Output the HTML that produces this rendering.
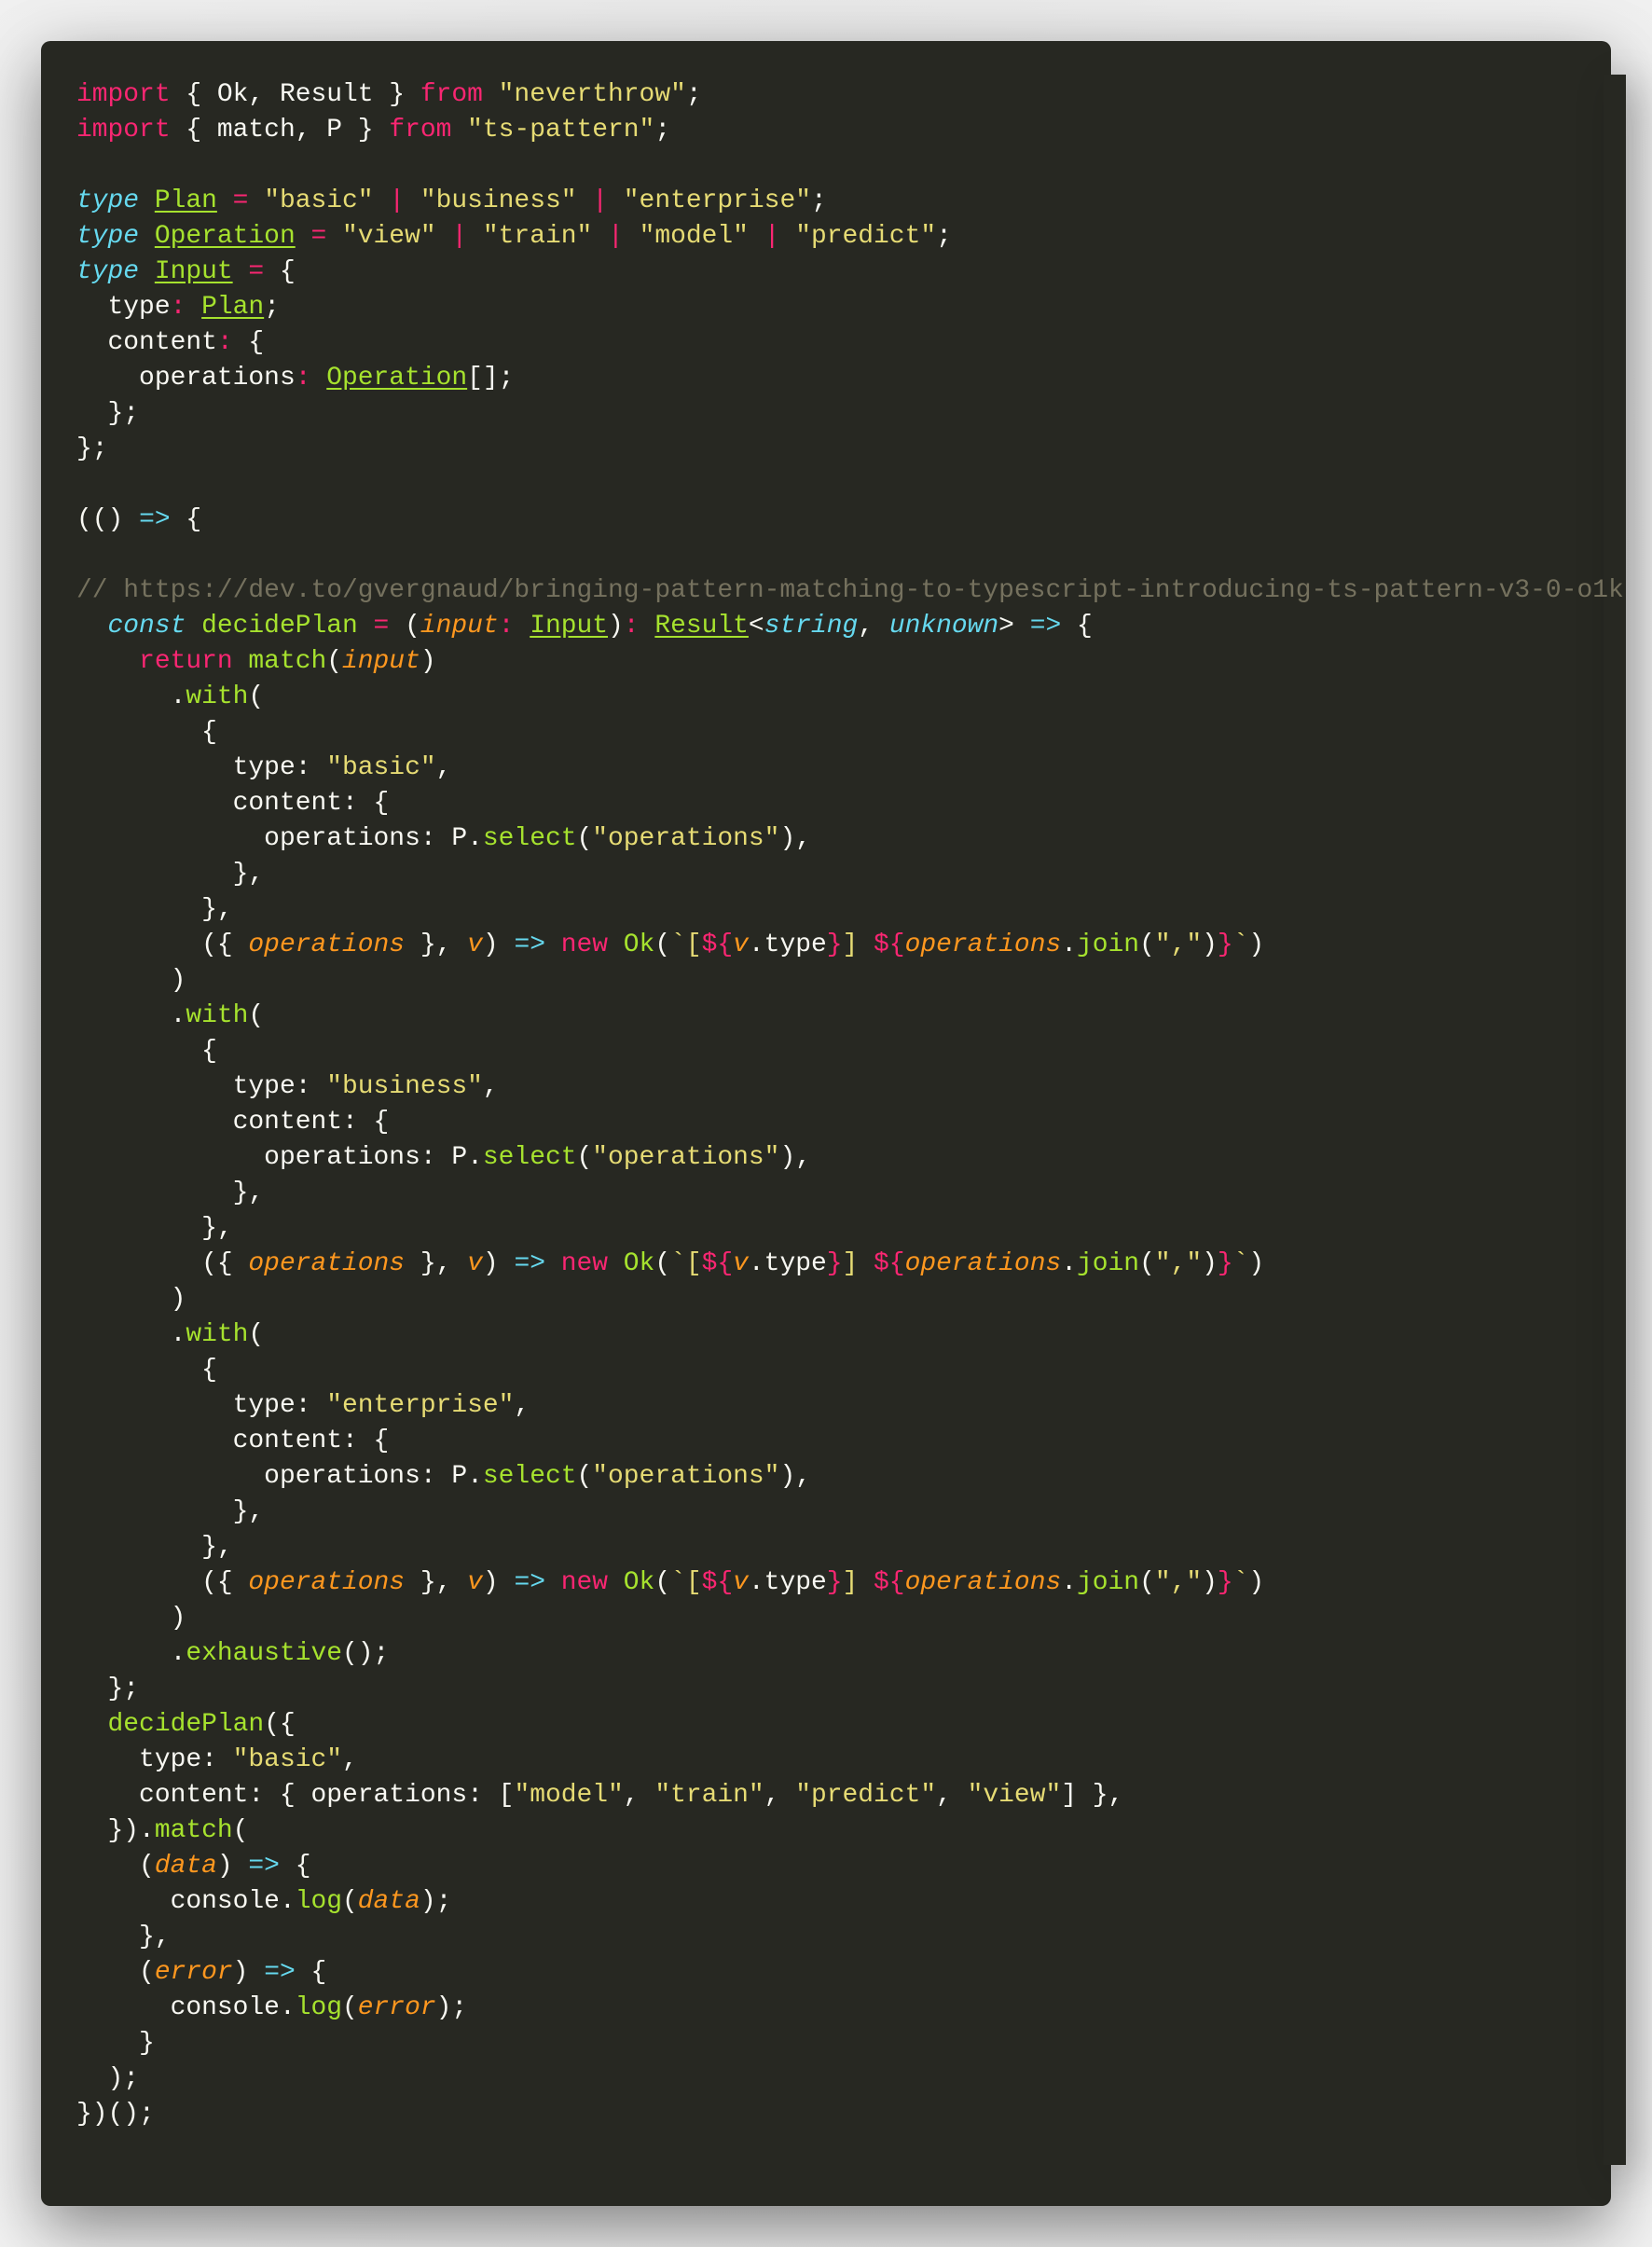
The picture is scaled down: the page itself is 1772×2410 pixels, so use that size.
<!DOCTYPE html>
<html><head><meta charset="utf-8"><style>
html,body{margin:0;padding:0}
body{width:1772px;height:2410px;background:#efefef;position:relative;overflow:hidden;
background:radial-gradient(ellipse at 50% 40%,#dcdcdc 0%,#ececec 60%,#f2f2f2 100%)}
.card{position:absolute;left:44px;top:44px;width:1684px;height:2322px;background:#272822;border-radius:10px;
box-shadow:0 24px 70px rgba(0,0,0,0.45)}
.strip{position:absolute;left:1720px;top:80px;width:24px;height:2242px;background:#272822;box-shadow:12px 10px 40px rgba(0,0,0,0.25)}
pre{position:absolute;left:82px;top:82.5px;width:1662px;overflow:hidden;margin:0;
font-family:"Liberation Mono",monospace;font-size:27.95px;line-height:38px;color:#f8f8f2;white-space:pre}
.k{color:#f92672}.s{color:#e6db74}.t{color:#66d9ef;font-style:italic}.c{color:#66d9ef}
.g{color:#a6e22e}.u{color:#a6e22e;text-decoration:underline;text-underline-offset:4px}
.o{color:#fd971f;font-style:italic}.cm{color:#75715e}
</style></head><body>
<div class="card"></div><div class="strip"></div>
<pre><span class="k">import</span> { Ok, Result } <span class="k">from</span> <span class="s">"neverthrow"</span>;
<span class="k">import</span> { match, P } <span class="k">from</span> <span class="s">"ts-pattern"</span>;

<span class="t">type</span> <span class="u">Plan</span> <span class="k">=</span> <span class="s">"basic"</span> <span class="k">|</span> <span class="s">"business"</span> <span class="k">|</span> <span class="s">"enterprise"</span>;
<span class="t">type</span> <span class="u">Operation</span> <span class="k">=</span> <span class="s">"view"</span> <span class="k">|</span> <span class="s">"train"</span> <span class="k">|</span> <span class="s">"model"</span> <span class="k">|</span> <span class="s">"predict"</span>;
<span class="t">type</span> <span class="u">Input</span> <span class="k">=</span> {
  type<span class="k">:</span> <span class="u">Plan</span>;
  content<span class="k">:</span> {
    operations<span class="k">:</span> <span class="u">Operation</span>[];
  };
};

(() <span class="c">=&gt;</span> {

<span class="cm">// https://dev.to/gvergnaud/bringing-pattern-matching-to-typescript-introducing-ts-pattern-v3-0-o1k</span>
  <span class="t">const</span> <span class="g">decidePlan</span> <span class="k">=</span> (<span class="o">input</span><span class="k">:</span> <span class="u">Input</span>)<span class="k">:</span> <span class="u">Result</span>&lt;<span class="t">string</span>, <span class="t">unknown</span>&gt; <span class="c">=&gt;</span> {
    <span class="k">return</span> <span class="g">match</span>(<span class="o">input</span>)
      .<span class="g">with</span>(
        {
          type: <span class="s">"basic"</span>,
          content: {
            operations: P.<span class="g">select</span>(<span class="s">"operations"</span>),
          },
        },
        ({ <span class="o">operations</span> }, <span class="o">v</span>) <span class="c">=&gt;</span> <span class="k">new</span> <span class="g">Ok</span>(<span class="s">`[</span><span class="k">${</span><span class="o">v</span>.type<span class="k">}</span><span class="s">] </span><span class="k">${</span><span class="o">operations</span>.<span class="g">join</span>(<span class="s">","</span>)<span class="k">}</span><span class="s">`</span>)
      )
      .<span class="g">with</span>(
        {
          type: <span class="s">"business"</span>,
          content: {
            operations: P.<span class="g">select</span>(<span class="s">"operations"</span>),
          },
        },
        ({ <span class="o">operations</span> }, <span class="o">v</span>) <span class="c">=&gt;</span> <span class="k">new</span> <span class="g">Ok</span>(<span class="s">`[</span><span class="k">${</span><span class="o">v</span>.type<span class="k">}</span><span class="s">] </span><span class="k">${</span><span class="o">operations</span>.<span class="g">join</span>(<span class="s">","</span>)<span class="k">}</span><span class="s">`</span>)
      )
      .<span class="g">with</span>(
        {
          type: <span class="s">"enterprise"</span>,
          content: {
            operations: P.<span class="g">select</span>(<span class="s">"operations"</span>),
          },
        },
        ({ <span class="o">operations</span> }, <span class="o">v</span>) <span class="c">=&gt;</span> <span class="k">new</span> <span class="g">Ok</span>(<span class="s">`[</span><span class="k">${</span><span class="o">v</span>.type<span class="k">}</span><span class="s">] </span><span class="k">${</span><span class="o">operations</span>.<span class="g">join</span>(<span class="s">","</span>)<span class="k">}</span><span class="s">`</span>)
      )
      .<span class="g">exhaustive</span>();
  };
  <span class="g">decidePlan</span>({
    type: <span class="s">"basic"</span>,
    content: { operations: [<span class="s">"model"</span>, <span class="s">"train"</span>, <span class="s">"predict"</span>, <span class="s">"view"</span>] },
  }).<span class="g">match</span>(
    (<span class="o">data</span>) <span class="c">=&gt;</span> {
      console.<span class="g">log</span>(<span class="o">data</span>);
    },
    (<span class="o">error</span>) <span class="c">=&gt;</span> {
      console.<span class="g">log</span>(<span class="o">error</span>);
    }
  );
})();</pre>
</body></html>
